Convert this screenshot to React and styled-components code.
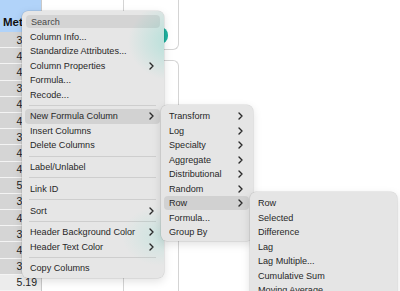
import React from "react";
import styled, { createGlobalStyle } from "styled-components";

const Global = createGlobalStyle`
  html, body { margin: 0; padding: 0; background: #fff; overflow: hidden; }
  body { font-family: "Liberation Sans", Arial, sans-serif; }
`;

const Page = styled.div`
  position: relative;
  width: 400px;
  height: 291px;
  display: flex;
  overflow: hidden;
  background: #fff;
`;

const DataColumn = styled.div`
  width: 41px;
  border-right: 1px solid #c9c9c9;
  display: flex;
  flex-direction: column;
`;

const HeaderCell = styled.div`
  height: 32px;
  background: #b1d3f9;
  display: flex;
  align-items: flex-end;
  padding: 0 0 4px 3px;
  box-sizing: border-box;
  font-weight: bold;
  font-size: 11.5px;
  color: #111;
  white-space: nowrap;
  overflow: hidden;
`;

const Cell = styled.div`
  height: 16.2px;
  box-sizing: border-box;
  border-bottom: 1px solid #f4f4f4;
  background: ${(p) => (p.$selected ? "#d5d5d5" : "#ececec")};
  display: flex;
  align-items: center;
  justify-content: flex-end;
  padding-right: 4px;
  font-size: 10.5px;
  color: #1e1e1e;
`;

const Spacer = styled.div`
  width: 81px;
`;

const CardColumn = styled.div`
  width: 56px;
  display: flex;
  flex-direction: column;
`;

const Card = styled.div`
  box-sizing: border-box;
  border: 1px solid #d4d4d4;
  background: #fff;
  display: flex;
  justify-content: flex-end;
  align-items: flex-start;
  ${(p) =>
    p.$top
      ? `height: 50px; border-top: none; border-radius: 0 0 6px 6px; padding: 27px 10px 0 0;`
      : `flex: 1; margin-top: 10px; border-bottom: none; border-radius: 6px 6px 0 0;`}
`;

const TealButton = styled.div`
  width: 40px;
  height: 17px;
  border-radius: 8px;
  background: #1fb3a1;
`;

const Menu = styled.div`
  position: absolute;
  left: ${(p) => p.$x}px;
  top: ${(p) => p.$y}px;
  width: ${(p) => p.$w}px;
  box-sizing: border-box;
  padding: ${(p) => p.$pt}px 4px 2px 3px;
  border-radius: 6px;
  background: ${(p) => p.$bg || "#e5e5e5"};
  box-shadow: 0 0 0 0.5px rgba(0, 0, 0, 0.13), 0 3px 10px rgba(0, 0, 0, 0.13);
  font-family: "Liberation Sans", Arial, sans-serif;
  font-size: 9.1px;
  color: #272727;
  display: flex;
  flex-direction: column;
`;

const SearchBox = styled.div`
  height: 13px;
  margin: 0 0 1.5px 1px;
  border-radius: 4px;
  background: rgba(0, 0, 0, 0.075);
  display: flex;
  align-items: center;
  padding-left: 5px;
  color: #474747;
`;

const Item = styled.div`
  height: 14.5px;
  flex: none;
  display: flex;
  align-items: center;
  justify-content: space-between;
  padding: 0 6px 0 5px;
  border-radius: 4px;
  white-space: nowrap;
  background: ${(p) => (p.$active ? "rgba(0,0,0,0.085)" : "transparent")};
`;

const Separator = styled.div`
  height: 1px;
  margin: 3.1px 4px 3.1px 4px;
  background: rgba(0, 0, 0, 0.1);
`;

const Chevron = () => (
  <svg width="5" height="8" viewBox="0 0 5 8">
    <path d="M1 1 L4 4 L1 7" fill="none" stroke="#2a2a2a" strokeWidth="1.4" strokeLinecap="round" strokeLinejoin="round" />
  </svg>
);

const values = ["3.52", "4.10", "4.33", "3.87", "4.21", "4.05", "3.66", "4.48", "4.12", "5.02", "3.91", "4.27", "3.74", "4.39", "3.58"];

const mainItems = [
  ["Column Info..."],
  ["Standardize Attributes..."],
  ["Column Properties", true],
  ["Formula..."],
  ["Recode..."],
  "-",
  ["New Formula Column", true, true],
  ["Insert Columns"],
  ["Delete Columns"],
  "-",
  ["Label/Unlabel"],
  "-",
  ["Link ID"],
  "-",
  ["Sort", true],
  "-",
  ["Header Background Color", true],
  ["Header Text Color", true],
  "-",
  ["Copy Columns"],
];

const sub1 = [
  ["Transform", true],
  ["Log", true],
  ["Specialty", true],
  ["Aggregate", true],
  ["Distributional", true],
  ["Random", true],
  ["Row", true, true],
  ["Formula..."],
  ["Group By"],
];

const sub2 = ["Row", "Selected", "Difference", "Lag", "Lag Multiple...", "Cumulative Sum", "Moving Average"].map((t) => [t]);

const renderItems = (list) =>
  list.map((it, i) =>
    it === "-" ? (
      <Separator key={i} />
    ) : (
      <Item key={i} $active={it[2]}>
        <span>{it[0]}</span>
        {it[1] && <Chevron />}
      </Item>
    )
  );

const mainBg =
  "radial-gradient(ellipse 46px 40px at 152px 30px, rgba(160,222,212,0.75), rgba(160,222,212,0) 100%), radial-gradient(ellipse 40px 30px at 140px 225px, rgba(185,226,219,0.6), rgba(185,226,219,0) 100%), #e6e6e6";

export default function App() {
  return (
    <>
      <Global />
      <Page>
        <DataColumn>
          <HeaderCell>Metric</HeaderCell>
          {values.map((v, i) => (
            <Cell key={i} $selected>
              {v}
            </Cell>
          ))}
          <Cell>5.19</Cell>
        </DataColumn>
        <Spacer />
        <CardColumn>
          <Card $top>
            <TealButton />
          </Card>
          <Card />
        </CardColumn>

        <Menu $x={22} $y={11} $w={142} $pt={4} $bg={mainBg}>
          <SearchBox>Search</SearchBox>
          {renderItems(mainItems)}
        </Menu>
        <Menu $x={161} $y={105} $w={92} $pt={3.75}>
          {renderItems(sub1)}
        </Menu>
        <Menu $x={250} $y={192.3} $w={147} $pt={3.7}>
          {renderItems(sub2)}
        </Menu>
      </Page>
    </>
  );
}
